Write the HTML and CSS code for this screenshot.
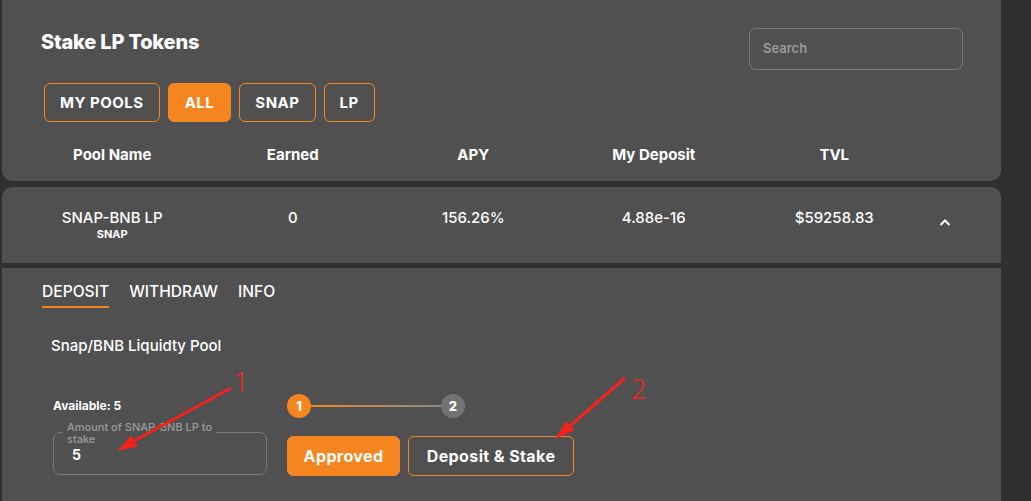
FILE: index.html
```html
<!DOCTYPE html>
<html lang="en">
<head>
<meta charset="utf-8">
<title>Stake LP Tokens</title>
<link rel="stylesheet" href="styles.css">
</head>
<body>
<div class="page">
  <section class="card card-top">
    <div class="top-row">
      <h1 class="title">Stake LP Tokens</h1>
      <div class="search">Search</div>
    </div>
    <div class="filters">
      <button class="filter">MY POOLS</button>
      <button class="filter active">ALL</button>
      <button class="filter">SNAP</button>
      <button class="filter">LP</button>
    </div>
    <div class="grid head">
      <div>Pool Name</div>
      <div>Earned</div>
      <div>APY</div>
      <div>My Deposit</div>
      <div>TVL</div>
      <div></div>
    </div>
  </section>

  <section class="card card-row">
    <div class="grid row">
      <div class="pool">
        <div class="pool-name">SNAP-BNB LP</div>
        <div class="pool-sub">SNAP</div>
      </div>
      <div>0</div>
      <div>156.26%</div>
      <div>4.88e-16</div>
      <div>$59258.83</div>
      <div class="chev">
        <svg width="12" height="8" viewBox="0 0 12 8"><polyline points="1.5,7 6,2.5 10.5,7" fill="none" stroke="#fff" stroke-width="2"/></svg>
      </div>
    </div>
  </section>

  <section class="card card-detail">
    <nav class="tabs">
      <span class="tab active">DEPOSIT</span>
      <span class="tab">WITHDRAW</span>
      <span class="tab">INFO</span>
    </nav>
    <div class="pool-title">Snap/BNB Liquidty Pool</div>
    <div class="form">
      <div class="form-left">
        <div class="avail">Available: 5</div>
        <div class="input">
          <span class="input-label">Amount of SNAP-BNB LP to<br>stake</span>
          <span class="input-value">5</span>
        </div>
      </div>
      <div class="form-right">
        <div class="stepper">
          <span class="step done">1</span>
          <span class="step-line"></span>
          <span class="step">2</span>
        </div>
        <div class="actions">
          <button class="btn btn-fill">Approved</button>
          <button class="btn btn-outline">Deposit &amp; Stake</button>
        </div>
      </div>
    </div>
  </section>
</div>

<svg class="annot" width="1031" height="501" viewBox="0 0 1031 501">
  <line x1="231" y1="388" x2="134" y2="441" stroke="#f5221b" stroke-width="3"/>
  <polygon points="117,451 137.6,446.6 131.4,435.6" fill="#f5221b"/>
  <text x="233" y="392" class="annot-num">1</text>
  <line x1="625" y1="378" x2="570" y2="426" stroke="#f5221b" stroke-width="3"/>
  <polygon points="555,439 574.2,430.6 566.0,421.2" fill="#f5221b"/>
  <text x="631" y="399" class="annot-num">2</text>
</svg>
</body>
</html>
```

FILE: styles.css
```css
* { box-sizing: border-box; }
html, body { margin: 0; padding: 0; }
body {
  background: #2f2f2f;
  font-family: "Inter", "Lato", sans-serif;
  color: #fff;
  width: 1031px;
  height: 501px;
  overflow: hidden;
  position: relative;
}
.page {
  padding-left: 2px;
  width: 1001px;
}
.card {
  background: #505050;
}
.card-top {
  height: 181px;
  border-radius: 0 0 10px 10px;
  padding-top: 28px;
}
.top-row {
  display: flex;
  justify-content: space-between;
  align-items: flex-start;
  padding: 0 38px 0 39px;
}
.title {
  margin: 2px 0 0;
  font-size: 20px;
  line-height: 24px;
  font-weight: 800;
  letter-spacing: -0.2px;
}
.search {
  width: 214px;
  height: 42px;
  border: 1px solid #7a7a7a;
  border-radius: 7px;
  padding: 10px 13px;
  font-size: 13px;
  font-weight: 600;
  color: #9c9c9c;
  line-height: 18px;
}
.filters {
  display: flex;
  gap: 8px;
  margin-top: 13px;
  padding-left: 42px;
}
.filter {
  height: 39px;
  padding: 0 15px;
  border: 1px solid #f5861f;
  border-radius: 6px;
  background: transparent;
  color: #fff;
  font-family: inherit;
  font-size: 15px;
  font-weight: 700;
  letter-spacing: 0.5px;
}
.filter.active {
  background: #f5861f;
  padding: 0 16px;
}
.grid {
  display: grid;
  grid-template-columns: repeat(5, 180.5px) 41px;
  padding-left: 20px;
  text-align: center;
}
.head {
  margin-top: 23px;
  font-size: 15px;
  line-height: 20px;
  font-weight: 700;
}
.card-row {
  margin-top: 6px;
  height: 76px;
  border-radius: 10px 10px 0 0;
  padding-top: 21px;
}
.row {
  font-size: 15px;
  line-height: 20px;
  font-weight: 500;
}
.pool-sub {
  font-size: 11px;
  line-height: 13px;
  font-weight: 700;
}
.chev {
  padding-top: 10px;
  line-height: 0;
}
.card-detail {
  margin-top: 5px;
  height: 240px;
  padding: 14px 0 0 40px;
}
.tabs {
  display: flex;
  gap: 20px;
}
.tab {
  font-size: 15.6px;
  line-height: 20px;
  font-weight: 500;
  padding-bottom: 4px;
  border-bottom: 2px solid transparent;
}
.tab.active {
  border-bottom-color: #f5861f;
}
.pool-title {
  margin-top: 28px;
  padding-left: 9px;
  font-size: 15px;
  line-height: 20px;
  font-weight: 500;
}
.form {
  display: flex;
  gap: 20px;
  margin-top: 38px;
  padding-left: 11px;
}
.form-left {
  width: 214px;
}
.avail {
  font-size: 12px;
  line-height: 24px;
  font-weight: 700;
}
.input {
  position: relative;
  margin-top: 14px;
  height: 43px;
  border: 1px solid #7a7a7a;
  border-radius: 7px;
  display: flex;
  align-items: center;
  padding-left: 18px;
}
.input-label {
  position: absolute;
  left: 9px;
  top: -12px;
  padding: 0 4px;
  background: #505050;
  color: #9c9c9c;
  font-size: 11px;
  line-height: 12px;
  font-weight: 500;
}
.input-value {
  font-size: 14px;
  font-weight: 700;
  padding-top: 2px;
}
.stepper {
  display: flex;
  align-items: center;
  height: 24px;
}
.step {
  width: 24px;
  height: 24px;
  border-radius: 50%;
  background: #737373;
  color: #fff;
  font-size: 13px;
  font-weight: 800;
  display: flex;
  align-items: center;
  justify-content: center;
}
.step.done {
  background: #f5861f;
}
.step-line {
  width: 130px;
  height: 2px;
  background: linear-gradient(to right, #f5861f, #8a8a8a);
}
.actions {
  display: flex;
  gap: 8px;
  margin-top: 18px;
}
.btn {
  height: 40px;
  border-radius: 6px;
  font-family: inherit;
  font-size: 16px;
  font-weight: 700;
  color: #fff;
  letter-spacing: 0.4px;
}
.btn-fill {
  width: 113px;
  background: #f5861f;
  border: 1px solid #f5861f;
}
.btn-outline {
  width: 166px;
  background: transparent;
  border: 1px solid #f5861f;
}
.annot {
  position: absolute;
  left: 0;
  top: 0;
  pointer-events: none;
}
.annot-num {
  font-family: "Noto Sans", sans-serif;
  font-weight: 300;
  font-size: 27px;
  fill: #f5221b;
}
```
